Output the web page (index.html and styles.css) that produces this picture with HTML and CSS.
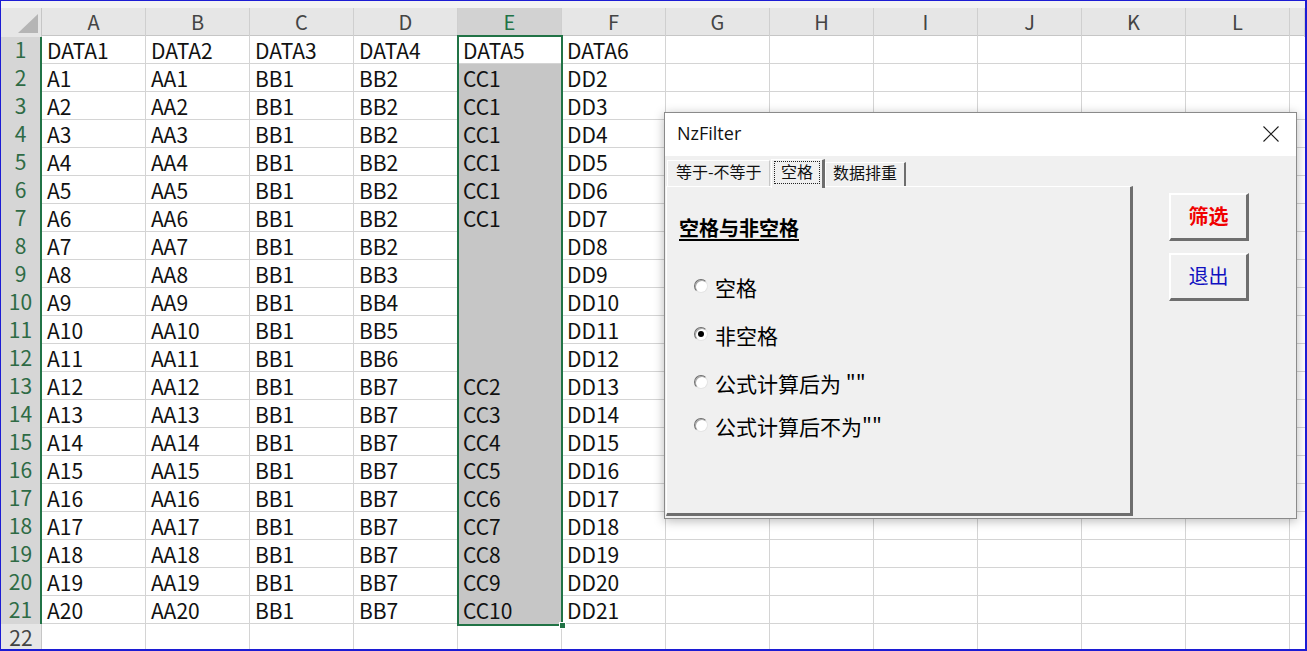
FILE: index.html
```html
<!DOCTYPE html>
<html lang="zh-CN">
<head>
<meta charset="utf-8">
<title>NzFilter</title>
<link rel="stylesheet" href="styles.css">
</head>
<body>
<div class="frame">
  <div class="topstrip"></div>
  <div class="sheet">
    <div class="row head">
      <div class="corner"><span class="tri"></span></div>
      <div class="ch">A</div><div class="ch">B</div><div class="ch">C</div><div class="ch">D</div><div class="ch sel">E</div><div class="ch">F</div><div class="ch">G</div><div class="ch">H</div><div class="ch">I</div><div class="ch">J</div><div class="ch">K</div><div class="ch">L</div><div class="ch"></div>
    </div>
    <div class="row"><div class="rh on">1</div><div class="c">DATA1</div><div class="c">DATA2</div><div class="c">DATA3</div><div class="c">DATA4</div><div class="c">DATA5</div><div class="c">DATA6</div></div>
    <div class="row"><div class="rh on">2</div><div class="c">A1</div><div class="c">AA1</div><div class="c">BB1</div><div class="c">BB2</div><div class="c g">CC1</div><div class="c">DD2</div></div>
    <div class="row"><div class="rh on">3</div><div class="c">A2</div><div class="c">AA2</div><div class="c">BB1</div><div class="c">BB2</div><div class="c g">CC1</div><div class="c">DD3</div></div>
    <div class="row"><div class="rh on">4</div><div class="c">A3</div><div class="c">AA3</div><div class="c">BB1</div><div class="c">BB2</div><div class="c g">CC1</div><div class="c">DD4</div></div>
    <div class="row"><div class="rh on">5</div><div class="c">A4</div><div class="c">AA4</div><div class="c">BB1</div><div class="c">BB2</div><div class="c g">CC1</div><div class="c">DD5</div></div>
    <div class="row"><div class="rh on">6</div><div class="c">A5</div><div class="c">AA5</div><div class="c">BB1</div><div class="c">BB2</div><div class="c g">CC1</div><div class="c">DD6</div></div>
    <div class="row"><div class="rh on">7</div><div class="c">A6</div><div class="c">AA6</div><div class="c">BB1</div><div class="c">BB2</div><div class="c g">CC1</div><div class="c">DD7</div></div>
    <div class="row"><div class="rh on">8</div><div class="c">A7</div><div class="c">AA7</div><div class="c">BB1</div><div class="c">BB2</div><div class="c g"></div><div class="c">DD8</div></div>
    <div class="row"><div class="rh on">9</div><div class="c">A8</div><div class="c">AA8</div><div class="c">BB1</div><div class="c">BB3</div><div class="c g"></div><div class="c">DD9</div></div>
    <div class="row"><div class="rh on">10</div><div class="c">A9</div><div class="c">AA9</div><div class="c">BB1</div><div class="c">BB4</div><div class="c g"></div><div class="c">DD10</div></div>
    <div class="row"><div class="rh on">11</div><div class="c">A10</div><div class="c">AA10</div><div class="c">BB1</div><div class="c">BB5</div><div class="c g"></div><div class="c">DD11</div></div>
    <div class="row"><div class="rh on">12</div><div class="c">A11</div><div class="c">AA11</div><div class="c">BB1</div><div class="c">BB6</div><div class="c g"></div><div class="c">DD12</div></div>
    <div class="row"><div class="rh on">13</div><div class="c">A12</div><div class="c">AA12</div><div class="c">BB1</div><div class="c">BB7</div><div class="c g">CC2</div><div class="c">DD13</div></div>
    <div class="row"><div class="rh on">14</div><div class="c">A13</div><div class="c">AA13</div><div class="c">BB1</div><div class="c">BB7</div><div class="c g">CC3</div><div class="c">DD14</div></div>
    <div class="row"><div class="rh on">15</div><div class="c">A14</div><div class="c">AA14</div><div class="c">BB1</div><div class="c">BB7</div><div class="c g">CC4</div><div class="c">DD15</div></div>
    <div class="row"><div class="rh on">16</div><div class="c">A15</div><div class="c">AA15</div><div class="c">BB1</div><div class="c">BB7</div><div class="c g">CC5</div><div class="c">DD16</div></div>
    <div class="row"><div class="rh on">17</div><div class="c">A16</div><div class="c">AA16</div><div class="c">BB1</div><div class="c">BB7</div><div class="c g">CC6</div><div class="c">DD17</div></div>
    <div class="row"><div class="rh on">18</div><div class="c">A17</div><div class="c">AA17</div><div class="c">BB1</div><div class="c">BB7</div><div class="c g">CC7</div><div class="c">DD18</div></div>
    <div class="row"><div class="rh on">19</div><div class="c">A18</div><div class="c">AA18</div><div class="c">BB1</div><div class="c">BB7</div><div class="c g">CC8</div><div class="c">DD19</div></div>
    <div class="row"><div class="rh on">20</div><div class="c">A19</div><div class="c">AA19</div><div class="c">BB1</div><div class="c">BB7</div><div class="c g">CC9</div><div class="c">DD20</div></div>
    <div class="row"><div class="rh on">21</div><div class="c">A20</div><div class="c">AA20</div><div class="c">BB1</div><div class="c">BB7</div><div class="c g">CC10</div><div class="c">DD21</div></div>
    <div class="row"><div class="rh">22</div></div>
  </div>

  <div class="selection"><span class="handle"></span></div>

  <div class="dialog">
    <div class="titlebar">
      <span class="title">NzFilter</span>
      <svg class="close" width="16" height="16" viewBox="0 0 16 16"><path d="M0.5 0.5 L15.5 15.5 M15.5 0.5 L0.5 15.5" stroke="#1a1a1a" stroke-width="1.1" fill="none"/></svg>
    </div>
    <div class="dbody">
      <div class="multipage">
        <div class="tabs">
          <div class="tab t1">等于-不等于</div>
          <div class="tab t2 active"><span class="focus">空格</span></div>
          <div class="tab t3">数据排重</div>
        </div>
        <div class="page">
          <div class="heading">空格与非空格</div>
          <div class="opts">
            <div class="opt"><span class="radio"></span><span>空格</span></div>
            <div class="opt o2"><span class="radio checked"></span><span>非空格</span></div>
            <div class="opt o3"><span class="radio"></span><span>公式计算后为 ""</span></div>
            <div class="opt o4"><span class="radio"></span><span>公式计算后不为""</span></div>
          </div>
        </div>
      </div>
      <div class="buttons">
        <div class="btn red">筛选</div>
        <div class="btn blue">退出</div>
      </div>
    </div>
  </div>
</div>
</body>
</html>
```

FILE: styles.css
```css
* { box-sizing: border-box; }
html, body { margin: 0; padding: 0; background: #fff; }
.frame {
  position: relative;
  width: 1307px;
  height: 651px;
  overflow: hidden;
  border-style: solid;
  border-color: #1c1cd4;
  border-width: 1px 2px 2px 1px;
  background: #fff;
  font-family: "Noto Sans CJK SC", "Noto Sans", sans-serif;
}
.topstrip { height: 7px; background: #f3f3f3; }
.sheet {
  display: flex;
  flex-direction: column;
}
.row {
  display: grid;
  grid-template-columns: 41px repeat(12, 104px) 1fr;
  height: 28px;
  flex: none;
  border-bottom: 1px solid #d4d4d4;
  background-image: linear-gradient(to right, transparent 103px, #d4d4d4 103px);
  background-size: 104px 100%;
  background-position: 41px 0;
  background-repeat: repeat-x;
}
.row.head {
  background: #e6e6e6;
  border-bottom: 1px solid #c6c6c6;
}
.corner { position: relative; background: #e6e6e6; border-right: 1px solid #c6c6c6; }
.tri {
  position: absolute;
  right: 3px;
  bottom: 4px;
  width: 0; height: 0;
  border-style: solid;
  border-width: 0 0 19px 20px;
  border-color: transparent transparent #b5b5b5 transparent;
}
.ch {
  border-right: 1px solid #cfcfcf;
  color: #444;
  font-size: 20px;
  line-height: 27px;
  text-align: center;
}
.ch.sel {
  background: #d2d2d2;
  color: #217346;
  border-bottom: 2px solid #217346;
}
.rh {
  background: #e6e6e6;
  color: #444;
  font-size: 21px;
  line-height: 27px;
  text-align: center;
  border-right: 1px solid #c6c6c6;
}
.rh.on {
  background: #d6d6d6;
  color: #2e6b45;
  border-right: 2px solid #217346;
}
.c {
  font-size: 21px;
  line-height: 28px;
  padding-left: 5px;
  color: #111;
  white-space: nowrap;
}
.c.g { background: #c6c6c6; }

.selection {
  position: absolute;
  left: 456px;
  top: 34px;
  width: 106px;
  height: 591px;
  border: 2px solid #217346;
  pointer-events: none;
}
.handle {
  position: absolute;
  right: -5px;
  bottom: -5px;
  width: 7px;
  height: 7px;
  background: #217346;
  border: 1px solid #fff;
}

/* dialog */
.dialog {
  position: absolute;
  left: 663px;
  top: 111px;
  width: 633px;
  height: 407px;
  border: 1px solid #8a8a8a;
  background: #f0f0f0;
  box-shadow: 0 2px 10px rgba(0,0,0,0.28);
  display: flex;
  flex-direction: column;
}
.titlebar {
  height: 43px;
  background: #fff;
  display: flex;
  align-items: center;
  justify-content: space-between;
  padding: 0 17px 3px 12px;
  flex: none;
}
.title {
  font-family: "Open Sans", "Noto Sans", sans-serif;
  font-size: 18px;
  color: #111;
}
.close { display: block; margin-top: 2px; }
.dbody {
  flex: 1;
  display: flex;
  padding: 2px 0 0 1px;
}
.multipage {
  width: 467px;
  display: flex;
  flex-direction: column;
}
.tabs {
  height: 28px;
  display: flex;
  align-items: flex-end;
  padding-left: 1px;
  position: relative;
  z-index: 1;
}
.tab {
  height: 26px;
  font-size: 16px;
  line-height: 20px;
  color: #111;
  background: #f0f0f0;
  border-top: 1px solid #fff;
  border-left: 1px solid #fff;
  border-right: 2px solid #6e6e6e;
  padding: 0 7px 0 8px;
}
.t1 { width: 103px; border-right-color: #c8c8c8; border-right-width: 1px; }
.t2 {
  width: 54px;
  height: 29px;
  margin-bottom: -2px;
  margin-left: 1px;
  padding: 1px 2px 0 2px;
  border-right-width: 3px;
}
.focus {
  display: block;
  border: 1px dotted #222;
  height: 23px;
  text-align: center;
  line-height: 19px;
}
.t3 { width: 81px; height: 24px; line-height: 19px; padding-left: 7px; }
.page {
  flex: 1;
  margin-bottom: 2px;
  border-top: 1px solid #fff;
  border-left: 1px solid #fff;
  border-right: 3px solid #6e6e6e;
  border-bottom: 3px solid #6e6e6e;
  padding: 28px 0 0 12px;
}
.heading {
  font-size: 20px;
  font-weight: bold;
  line-height: 26px;
  text-decoration: underline;
  text-underline-offset: 3px;
  color: #000;
}
.opts {
  display: flex;
  flex-direction: column;
  margin-top: 32px;
  padding-left: 15px;
}
.opt {
  height: 28px;
  display: flex;
  align-items: center;
  gap: 7px;
  font-size: 21px;
  color: #000;
}
.o2 { margin-top: 20px; }
.o3 { margin-top: 20px; }
.o4 { margin-top: 15px; }
.radio {
  width: 14px;
  height: 14px;
  border-radius: 50%;
  background: #fff;
  border: 1px solid;
  border-color: #6e6e6e #e4e4e4 #e4e4e4 #6e6e6e;
  box-shadow: inset 1px 1px 0 #a8a8a8;
  position: relative;
  flex: none;
  margin-top: -3px;
}
.radio.checked::after {
  content: "";
  position: absolute;
  left: 3px;
  top: 3px;
  width: 6px;
  height: 6px;
  border-radius: 50%;
  background: #000;
}
.buttons {
  display: flex;
  flex-direction: column;
  gap: 12px;
  padding: 35px 0 0 36px;
}
.btn {
  width: 80px;
  height: 48px;
  background: #f0f0f0;
  border-top: 2px solid #fff;
  border-left: 2px solid #fff;
  border-right: 3px solid #6e6e6e;
  border-bottom: 3px solid #6e6e6e;
  font-size: 20px;
  line-height: 42px;
  text-align: center;
}
.btn.red { color: #f00000; font-weight: bold; }
.btn.blue { color: #1010c0; }
```
